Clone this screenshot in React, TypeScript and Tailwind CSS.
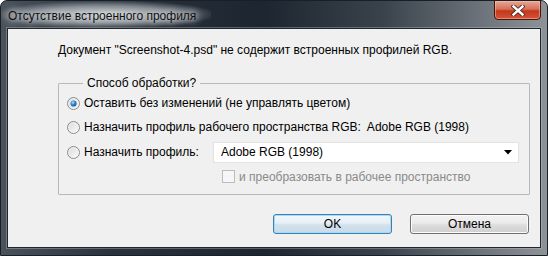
import React from "react";

const font = { fontFamily: '"Liberation Sans", Arial, sans-serif' };

function Radio({ checked }: { checked?: boolean }) {
  return (
    <svg width="13" height="13" viewBox="0 0 13 13" className="shrink-0">
      <defs>
        <linearGradient id="rg" x1="0" y1="0" x2="1" y2="1">
          <stop offset="0" stopColor="#d8d8d8" />
          <stop offset="1" stopColor="#fcfcfc" />
        </linearGradient>
        <radialGradient id="dot" cx="0.4" cy="0.35" r="0.7">
          <stop offset="0" stopColor="#b8e0fb" />
          <stop offset="0.5" stopColor="#3c86c8" />
          <stop offset="1" stopColor="#14497f" />
        </radialGradient>
      </defs>
      <circle cx="6.5" cy="6.5" r="6" fill="url(#rg)" stroke="#8c8c8c" strokeWidth="1" />
      <circle cx="6.5" cy="6.5" r="4.6" fill="none" stroke="#f4f4f4" strokeWidth="0.8" />
      {checked && (
        <>
          <circle cx="6.5" cy="6.5" r="4" fill="#cfe6f7" />
          <circle cx="6.5" cy="6.5" r="3" fill="url(#dot)" />
        </>
      )}
    </svg>
  );
}

export default function App() {
  return (
    <div
      className="w-[548px] h-[256px] flex flex-col rounded-t-[7px] overflow-hidden border border-[#1a1f25] bg-[linear-gradient(90deg,#4a535c_0%,#2a333d_20%,#1d2630_48%,#3a434c_70%,#8e9398_100%)] text-[12px] text-black"
      style={font}
    >
      <div className="h-[27px] flex justify-between items-start relative">
        <div className="absolute left-0 top-0 w-[210px] h-[27px] bg-[radial-gradient(ellipse_at_center,rgba(225,228,230,0.85)_0%,rgba(200,205,210,0.55)_45%,rgba(80,90,100,0)_75%)]" />
        <div className="relative pl-[7px] pt-[7px] leading-[16px] text-[#101010] [text-shadow:0_0_6px_#e8eaec,0_0_10px_#e8eaec]">
          Отсутствие встроенного профиля
        </div>
        <div className="relative mr-[6px] mt-[-1px] w-[47px] h-[20px] rounded-b-[4px] border border-[#4a1208] bg-[linear-gradient(180deg,#e8a898_0%,#d6705a_45%,#c4381c_55%,#d2543a_100%)] shadow-[inset_0_0_0_1px_rgba(255,200,180,0.5)] flex items-center justify-center">
          <svg width="14" height="11" viewBox="0 0 14 11">
            <path d="M2.5 1.5 L11.5 9.5 M11.5 1.5 L2.5 9.5" stroke="#4a2a24" strokeWidth="4.2" strokeLinecap="square" />
            <path d="M2.5 1.5 L11.5 9.5 M11.5 1.5 L2.5 9.5" stroke="#ffffff" strokeWidth="2.4" strokeLinecap="square" />
          </svg>
        </div>
      </div>
      <div className="mx-[6px] mb-[7px] flex-1 border border-[#1e262e] bg-[#f0f0f0] shadow-[0_0_0_1px_rgba(200,205,210,0.35)] flex flex-col">
        <div className="pl-[50px] pt-[13px] leading-[16px]">
          Документ "Screenshot-4.psd" не содержит встроенных профилей RGB.
        </div>
        <fieldset className="ml-[50px] mt-[17px] w-[472px] border border-[#b9b9b9] rounded-[1px] pl-[8px] pb-[6px]">
          <legend className="ml-[16px] px-[4px] leading-[16px]">Способ обработки?</legend>
          <div className="h-[24px] flex items-center">
            <Radio checked />
            <span className="ml-[4px]">Оставить без изменений (не управлять цветом)</span>
          </div>
          <div className="h-[24px] flex items-center">
            <Radio />
            <span className="ml-[4px]">Назначить профиль рабочего пространства RGB:&nbsp; Adobe RGB (1998)</span>
          </div>
          <div className="h-[26px] flex items-center">
            <Radio />
            <span className="ml-[4px] w-[129px]">Назначить профиль:</span>
            <div className="w-[306px] h-[21px] bg-white border border-[#e2e2e2] flex items-center justify-between pl-[7px] pr-[6px]">
              <span>Adobe RGB (1998)</span>
              <svg width="8" height="5" viewBox="0 0 8 5">
                <path d="M0 0 H8 L4 4.5 Z" fill="#000" />
              </svg>
            </div>
          </div>
          <div className="h-[23px] flex items-center pl-[155px]">
            <div className="w-[13px] h-[13px] border border-[#bcbcbc] bg-[#f6f6f6]" />
            <span className="ml-[4px] text-[#8a8a8a]">и преобразовать в рабочее пространство</span>
          </div>
        </fieldset>
        <div className="mt-[19px] flex justify-end gap-[18px] pr-[11px]">
          <button className="w-[119px] h-[20px] rounded-[3px] border border-[#3c7fb1] bg-[linear-gradient(180deg,#f2f8fc_0%,#e6eff6_45%,#d2e1ec_55%,#c8dbe9_100%)] shadow-[inset_0_0_0_1px_#a6dbf6] leading-[16px]">
            OK
          </button>
          <button className="w-[119px] h-[20px] rounded-[3px] border border-[#707070] bg-[linear-gradient(180deg,#f2f2f2_0%,#ebebeb_45%,#dddddd_55%,#cfcfcf_100%)] shadow-[inset_0_0_0_1px_#fcfcfc] leading-[16px]">
            Отмена
          </button>
        </div>
      </div>
    </div>
  );
}
